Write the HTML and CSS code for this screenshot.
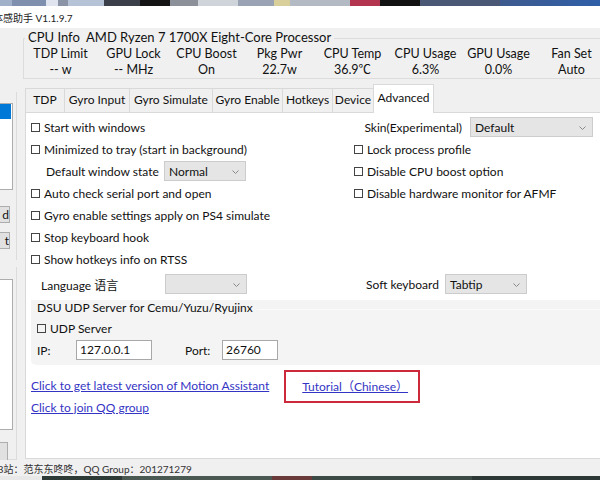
FILE: index.html
```html
<!DOCTYPE html>
<html>
<head>
<meta charset="utf-8">
<link rel="stylesheet" href="styles.css">
</head>
<body>
<div class="screen">
  <div class="topstrip">
    <span class="ts c1"></span><span class="ts c2"></span><span class="ts c3"></span><span class="ts c4"></span><span class="ts c5"></span><span class="ts c6"></span><span class="ts c7"></span><span class="ts c8"></span><span class="ts c9"></span><span class="ts c10"></span><span class="ts c11"></span><span class="ts c12"></span><span class="ts c13"></span><span class="ts c14"></span><span class="ts c15"></span><span class="ts c16"></span>
  </div>
  <div class="titlebar"><span class="title">体感助手 V1.1.9.7</span></div>
  <div class="main">
    <div class="leftcol">
      <div class="lgroup g1">
        <div class="listbox lb1"><div class="lsel"></div></div>
        <div class="lbtn b1">d</div>
        <div class="lbtn b2">t</div>
      </div>
      <div class="lgroup g2">
        <div class="listbox lb2"></div>
        <div class="lbtn b3"></div>
      </div>
    </div>
    <div class="rightcol">
      <div class="cpubox">
        <div class="cpuhead">CPU Info&nbsp; AMD Ryzen 7 1700X Eight-Core Processor</div>
        <div class="stats">
          <div class="stat"><span>TDP Limit</span><span>-- w</span></div>
          <div class="stat"><span>GPU Lock</span><span>-- MHz</span></div>
          <div class="stat"><span>CPU Boost</span><span>On</span></div>
          <div class="stat"><span>Pkg Pwr</span><span>22.7w</span></div>
          <div class="stat"><span>CPU Temp</span><span>36.9℃</span></div>
          <div class="stat"><span>CPU Usage</span><span>6.3%</span></div>
          <div class="stat"><span>GPU Usage</span><span>0.0%</span></div>
          <div class="stat"><span>Fan Set</span><span>Auto</span></div>
        </div>
      </div>
      <div class="tabs">
        <div class="tab t1">TDP</div>
        <div class="tab t2">Gyro Input</div>
        <div class="tab t3">Gyro Simulate</div>
        <div class="tab t4">Gyro Enable</div>
        <div class="tab t5">Hotkeys</div>
        <div class="tab t6">Device</div>
        <div class="tab t7 active">Advanced</div>
      </div>
      <div class="panel">
        <div class="opts">
          <div class="row"><span class="cb"></span>Start with windows</div>
          <div class="row skin"><span class="skinlbl">Skin(Experimental)</span><div class="select skinsel">Default<svg class="chev" width="7" height="4" viewBox="0 0 7 4"><path d="M0.5 0.5 L3.5 3.5 L6.5 0.5" fill="none" stroke="#888" stroke-width="1"/></svg></div></div>
          <div class="row"><span class="cb"></span>Minimized to tray (start in background)</div>
          <div class="row"><span class="cb"></span>Lock process profile</div>
          <div class="row indent"><span class="lbl lbl-dws">Default window state</span><div class="select">Normal<svg class="chev" width="7" height="4" viewBox="0 0 7 4"><path d="M0.5 0.5 L3.5 3.5 L6.5 0.5" fill="none" stroke="#888" stroke-width="1"/></svg></div></div>
          <div class="row"><span class="cb"></span>Disable CPU boost option</div>
          <div class="row"><span class="cb"></span>Auto check serial port and open</div>
          <div class="row"><span class="cb"></span>Disable hardware monitor for AFMF</div>
          <div class="row"><span class="cb"></span>Gyro enable settings apply on PS4 simulate</div>
          <div class="row"></div>
          <div class="row"><span class="cb"></span>Stop keyboard hook</div>
          <div class="row"></div>
          <div class="row"><span class="cb"></span>Show hotkeys info on RTSS</div>
          <div class="row"></div>
        </div>
        <div class="opts langrow">
          <div class="row lang"><span class="lbl lbl-lang">Language 语言</span><div class="select"><svg class="chev" width="7" height="4" viewBox="0 0 7 4"><path d="M0.5 0.5 L3.5 3.5 L6.5 0.5" fill="none" stroke="#888" stroke-width="1"/></svg></div></div>
          <div class="row soft"><span class="lbl lbl-soft">Soft keyboard</span><div class="select">Tabtip<svg class="chev" width="7" height="4" viewBox="0 0 7 4"><path d="M0.5 0.5 L3.5 3.5 L6.5 0.5" fill="none" stroke="#888" stroke-width="1"/></svg></div></div>
        </div>
        <div class="dsu">
          <div class="dsuhead"><span>DSU UDP Server for Cemu/Yuzu/Ryujinx</span><span class="dsuline"></span></div>
          <div class="dsurow"><span class="cb"></span>UDP Server</div>
          <div class="dsurow iprow">
            <span class="iplbl">IP:</span><div class="input ipin">127.0.0.1</div>
            <span class="portlbl">Port:</span><div class="input portin">26760</div>
          </div>
        </div>
        <div class="links">
          <div class="linkrow"><a class="link">Click to get latest version of Motion Assistant</a><span class="tut"><a class="link">Tutorial（Chinese）</a></span></div>
          <div class="linkrow"><a class="link">Click to join QQ group</a></div>
        </div>
      </div>
    </div>
  </div>
  <div class="status"><span class="stattext">B站：范东东咚咚，QQ Group：201271279</span></div>
  <div class="bottomstrip"><span class="bs light"></span><span class="bs d1"></span><span class="bs d2"></span><span class="bs d3"></span><span class="bs d4"></span><span class="bs d5"></span></div>
</div>
</body>
</html>
```

FILE: styles.css
```css
* { box-sizing: border-box; margin: 0; padding: 0; }
body {
  width: 600px; height: 480px; overflow: hidden;
  background: #f0f0f0;
  font-family: Lato, "Noto Sans CJK SC", sans-serif;
  font-size: 12px; color: #111;
}
.screen { width: 600px; height: 480px; display: flex; flex-direction: column; overflow: hidden; }

/* top desktop strip */
.topstrip { height: 6px; flex: none; display: flex; }
.ts { height: 100%; display: block; }
.c1 { width: 12px; background: #9fb0c8; }
.c2 { width: 34px; background: #7e90ad; }
.c3 { width: 12px; background: #dfe4ee; }
.c4 { width: 10px; background: #8a94a6; }
.c5 { width: 36px; background: #b6c2d6; }
.c6 { width: 36px; background: #3a3f4a; }
.c7 { width: 30px; background: #141414; }
.c8 { width: 28px; background: #8c9098; }
.c9 { width: 40px; background: #cfd3da; }
.c10 { width: 36px; background: #9aa3b3; }
.c11 { width: 16px; background: #d8cf9a; }
.c12 { width: 60px; background: #b4bac4; }
.c13 { width: 30px; background: #b3344e; }
.c14 { width: 40px; background: #121212; }
.c15 { width: 80px; background: #4a5876; }
.c16 { flex: 1; background: linear-gradient(90deg, #3e5a8e, #2f5fa8); }

.titlebar { height: 22px; flex: none; background: #fff; display: flex; align-items: center; overflow: hidden; font-size: 10px; }
.title { margin-left: -7px; color: #222; white-space: nowrap; }

.main { height: 432px; flex: none; display: flex; }

/* left partial column */
.leftcol { width: 17px; flex: none; display: flex; flex-direction: column; overflow: hidden; }
.lgroup { border-right: 1px solid #dcdcdc; }
.g1 { margin-top: 64px; height: 168px; padding-top: 11px; }
.g2 { margin-top: 7px; height: 193px; border-bottom: 1px solid #dcdcdc; padding-top: 12px; }
.listbox { width: 13px; background: #fff; border: 1px solid #adadad; border-left: none; }
.lb1 { height: 87px; }
.lsel { height: 15px; background: #0078d7; margin-right: 1px; }
.lb2 { height: 151px; }
.lbtn { width: 10px; height: 17px; background: #e1e1e1; border: 1px solid #adadad; border-left: none; font-size: 12px; line-height: 15px; text-align: right; overflow: hidden; color: #111; }
.b1 { margin-top: 16px; }
.b2 { margin-top: 9px; }
.b3 { margin-top: 12px; width: 8px; height: 20px; }

/* right area */
.rightcol { flex: 1; min-width: 0; padding-left: 6px; display: flex; flex-direction: column; }
.cpubox { margin-top: 10px; height: 41px; border: 1px solid #dcdcdc; border-right: none; flex: none; }
.cpuhead { width: fit-content; margin-top: -10px; margin-left: 1px; padding: 0 3px; line-height: 16px; font-size: 13px; background: #f0f0f0; white-space: nowrap; }
.stats { display: grid; grid-template-columns: repeat(8, 73px); padding-top: 1px; }
.stat { display: flex; flex-direction: column; align-items: center; line-height: 16px; white-space: nowrap; font-size: 12.5px; }

.tabs { margin-top: 5px; margin-left: 2px; height: 28px; flex: none; display: flex; align-items: flex-end; }
.tab { height: 24px; line-height: 22px; text-align: center; border: 1px solid #d9d9d9; border-bottom: none; margin-right: -1px; background: #f0f0f0; white-space: nowrap; }
.t1 { width: 40px; }
.t2 { width: 66px; }
.t3 { width: 84px; }
.t4 { width: 71px; }
.t5 { width: 51px; }
.t6 { width: 42px; }
.t7 { width: 61px; }
.tab.active { height: 29px; line-height: 26px; background: #fff; position: relative; z-index: 1; margin-bottom: -1px; }

.panel { margin-left: 2px; flex: 1; margin-bottom: 1px; background: #fff; border: 1px solid #d9d9d9; border-right: none; padding: 3px 0 0 5px; }

.opts { display: grid; grid-template-columns: 323px 239px; grid-auto-rows: 22px; }
.row { display: flex; align-items: center; white-space: nowrap; }
.cb { width: 9px; height: 9px; border: 1px solid #444; margin-right: 4px; flex: none; }
.skin { justify-content: flex-end; }
.skinlbl { margin-right: 8px; }
.select { width: 82px; height: 20px; background: #e5e5e5; border: 1px solid #cccccc; display: flex; align-items: center; padding-left: 4px; position: relative; flex: none; }
.skinsel { width: 123px; }
.chev { position: absolute; right: 6px; top: 8px; }
.indent { padding-left: 15px; }
.lbl-dws { width: 118px; }
.langrow { margin-top: 3px; }
.lang { padding-left: 10px; }
.lbl-lang { width: 124px; }
.soft { padding-left: 12px; }
.lbl-soft { width: 79px; }

.dsu { margin-top: 5px; height: 65px; background: #f4f4f4; border-radius: 0 0 0 5px; padding-left: 6px; }
.dsuhead { display: flex; align-items: center; line-height: 16px; white-space: nowrap; }
.dsuline { flex: 1; border-top: 1px solid #fbfbfb; margin-left: 4px; margin-top: 2px; }
.dsurow { display: flex; align-items: center; height: 22px; margin-top: 1px; }
.iprow { margin-top: 0; }
.iplbl { width: 39px; }
.input { height: 20px; background: #fff; border: 1px solid #a8a8a8; padding-left: 3px; line-height: 18px; }
.ipin { width: 76px; }
.portlbl { margin-left: 33px; width: 37px; }
.portin { width: 56px; }

.links { margin-top: 9px; }
.linkrow { height: 22px; display: flex; align-items: center; white-space: nowrap; }
.link { color: #3434c4; text-decoration: underline; }
.tut { margin-left: 33px; position: relative; }
.tut::after { content: ""; position: absolute; left: -18px; right: -12px; top: -7px; bottom: -9px; border: 2px solid #cc2a3a; }

.status { height: 16px; flex: none; display: flex; align-items: center; font-size: 10px; overflow: hidden; }
.stattext { margin-left: -3px; color: #333; white-space: nowrap; }
.bottomstrip { flex: 1; display: flex; }
.bs { height: 100%; }
.bs.light { width: 42px; background: #e8e8e8; }
.d1 { width: 80px; background: #2e3a36; }
.d2 { width: 150px; background: #4a5a52; }
.d3 { width: 40px; background: #6a3a3a; }
.d4 { width: 160px; background: #3c4a46; }
.d5 { flex: 1; background: #2c3836; }
```
